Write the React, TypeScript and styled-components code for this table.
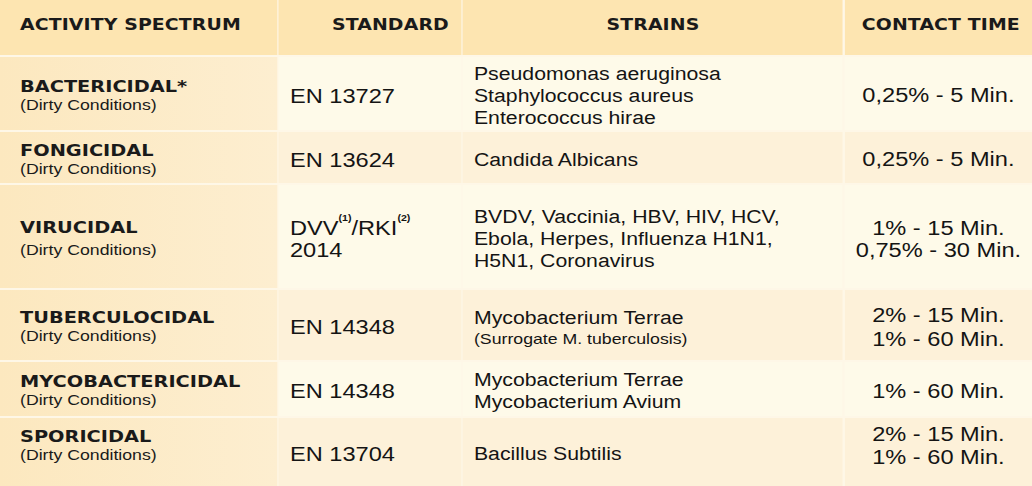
import React from "react";
import styled, { createGlobalStyle } from "styled-components";

const GlobalStyle = createGlobalStyle`
  html, body { margin: 0; padding: 0; background: #fef8ea; }
  body { width: 1032px; height: 486px; overflow: hidden; }
`;

const STRETCH = 1.18;

const Stage = styled.div`
  width: 1032px;
  height: 486px;
  overflow: hidden;
  background: #fef8ea;
`;

const Table = styled.div`
  width: ${1032 / STRETCH}px;
  transform: scaleX(${STRETCH});
  transform-origin: left top;
  display: grid;
  grid-template-columns: ${277 / STRETCH}px ${182 / STRETCH}px ${380 / STRETCH}px ${187 / STRETCH}px;
  grid-template-rows: 55px 73px 51px 103px 70px 54px 68px;
  column-gap: ${2 / STRETCH}px;
  row-gap: 2px;
  background: #fef7e7;
  color: #141414;
  font-family: "Liberation Sans", Arial, sans-serif;
`;

const HeadCell = styled.div<{ $align?: "left" | "center"; $pad?: number }>`
  background: #fde5b1;
  display: flex;
  align-items: center;
  justify-content: ${(p) => (p.$align === "left" ? "flex-start" : "center")};
  padding: 0 0 7px ${(p) => p.$pad ?? 0}px;
  font-family: "DejaVu Sans", Verdana, sans-serif;
  font-weight: bold;
  font-size: 16px;
  letter-spacing: 0.1px;
  color: #1a1a1a;
  white-space: nowrap;
`;

const Cell = styled.div<{ $tone: "odd" | "even" | "side"; $lift?: number; $center?: boolean; $pad?: number }>`
  background: ${(p) =>
    p.$tone === "side"
      ? "linear-gradient(to right, #fce8bf, #fdeed0)"
      : p.$tone === "odd"
      ? "#fefae9"
      : "#fdf1d9"};
  display: flex;
  flex-direction: column;
  justify-content: center;
  align-items: ${(p) => (p.$center ? "center" : "flex-start")};
  padding: 4px 0 ${(p) => p.$lift ?? 0}px ${(p) => p.$pad ?? 0}px;
  box-sizing: border-box;
  white-space: nowrap;
`;

const Title = styled.div`
  font-family: "DejaVu Sans", Verdana, sans-serif;
  font-weight: bold;
  font-size: 16.4px;
  line-height: 18px;
  color: #1a1a1a;
`;

const Sub = styled.div<{ $gap?: number }>`
  font-size: 15px;
  line-height: 18px;
  margin-top: ${(p) => p.$gap ?? 0}px;
  color: #1a1a1a;
`;

const Standard = styled.div`
  font-size: 20px;
  line-height: 22px;
`;

const Sup = styled.sup`
  font-size: 9px;
  font-weight: bold;
  line-height: 0;
  vertical-align: 14px;
`;

const Strain = styled.div<{ $small?: boolean }>`
  font-size: ${(p) => (p.$small ? 15 : 18)}px;
  line-height: ${(p) => (p.$small ? 19 : 22)}px;
`;

const Time = styled.div<{ $lh?: number }>`
  font-size: 20px;
  line-height: ${(p) => p.$lh ?? 23}px;
`;

type Row = {
  title: string;
  subGap?: number;
  standard: React.ReactNode;
  strains: { text: string; small?: boolean }[];
  times: string[];
  timeLh?: number;
  lift?: number;
};

const rows: Row[] = [
  {
    title: "BACTERICIDAL*",
    standard: "EN 13727",
    strains: [
      { text: "Pseudomonas aeruginosa" },
      { text: "Staphylococcus aureus" },
      { text: "Enterococcus hirae" },
    ],
    times: ["0,25% - 5 Min."],
  },
  {
    title: "FONGICIDAL",
    standard: "EN 13624",
    strains: [{ text: "Candida Albicans" }],
    times: ["0,25% - 5 Min."],
  },
  {
    title: "VIRUCIDAL",
    subGap: 4,
    standard: (
      <>
        <div>
          DVV<Sup>(1)</Sup>/RKI<Sup>(2)</Sup>
        </div>
        <div>2014</div>
      </>
    ),
    strains: [
      { text: "BVDV, Vaccinia, HBV, HIV, HCV," },
      { text: "Ebola, Herpes, Influenza H1N1," },
      { text: "H5N1, Coronavirus" },
    ],
    times: ["1% - 15 Min.", "0,75% - 30 Min."],
    timeLh: 22,
  },
  {
    title: "TUBERCULOCIDAL",
    standard: "EN 14348",
    strains: [
      { text: "Mycobacterium Terrae" },
      { text: "(Surrogate M. tuberculosis)", small: true },
    ],
    times: ["2% - 15 Min.", "1% - 60 Min."],
    timeLh: 24,
  },
  {
    title: "MYCOBACTERICIDAL",
    standard: "EN 14348",
    strains: [{ text: "Mycobacterium Terrae" }, { text: "Mycobacterium Avium" }],
    times: ["1% - 60 Min."],
  },
  {
    title: "SPORICIDAL",
    standard: "EN 13704",
    strains: [{ text: "Bacillus Subtilis" }],
    times: ["2% - 15 Min.", "1% - 60 Min."],
    lift: 16,
  },
];

export default function App() {
  const pad = 20 / STRETCH;
  const pad2 = 11 / STRETCH;
  return (
    <Stage>
      <GlobalStyle />
      <Table>
        <HeadCell $align="left" $pad={pad}>ACTIVITY SPECTRUM</HeadCell>
        <HeadCell $align="left" $pad={53 / STRETCH}>STANDARD</HeadCell>
        <HeadCell>STRAINS</HeadCell>
        <HeadCell $pad={4}>CONTACT TIME</HeadCell>
        {rows.map((r, i) => {
          const tone = i % 2 === 0 ? "odd" : "even";
          return (
            <React.Fragment key={r.title}>
              <Cell $tone="side" $pad={pad} $lift={r.lift}>
                <Title>{r.title}</Title>
                <Sub $gap={r.subGap}>(Dirty Conditions)</Sub>
              </Cell>
              <Cell $tone={tone} $pad={pad2}>
                <Standard>{r.standard}</Standard>
              </Cell>
              <Cell $tone={tone} $pad={pad2}>
                {r.strains.map((s) => (
                  <Strain key={s.text} $small={s.small}>
                    {s.text}
                  </Strain>
                ))}
              </Cell>
              <Cell $tone={tone} $center $lift={r.lift}>
                {r.times.map((t) => (
                  <Time key={t} $lh={r.timeLh}>
                    {t}
                  </Time>
                ))}
              </Cell>
            </React.Fragment>
          );
        })}
      </Table>
    </Stage>
  );
}
